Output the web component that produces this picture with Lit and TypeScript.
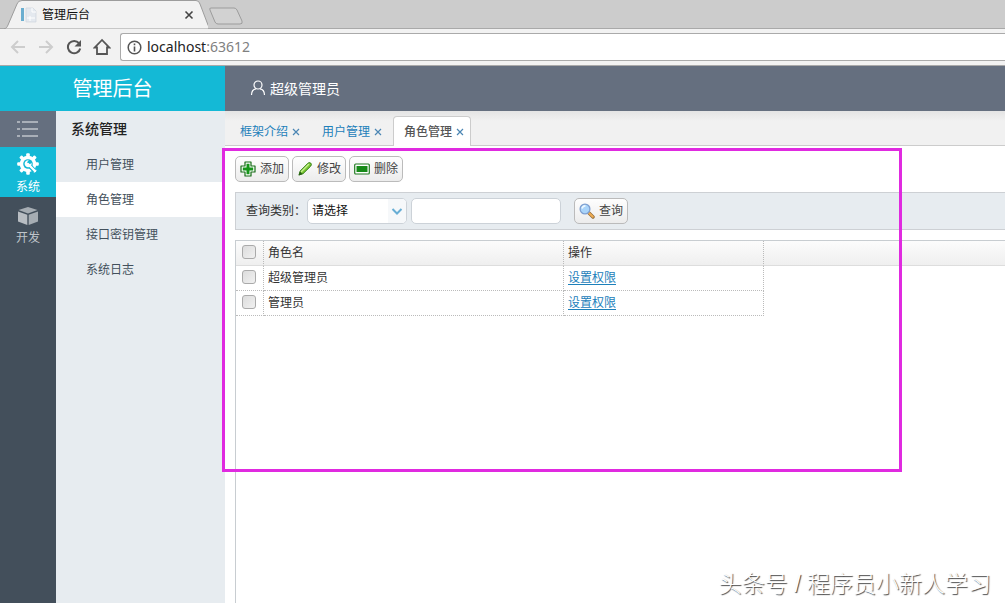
import { LitElement, html, css, svg } from "lit";
import { customElement, state } from "lit/decorators.js";
import { classMap } from "lit/directives/class-map.js";

const FONT = css`"Liberation Sans", "Noto Sans CJK SC", sans-serif`;

@customElement("browser-chrome")
export class BrowserChrome extends LitElement {
  static styles = css`
    :host { display: block; flex: none; font-family: "Noto Sans", "Noto Sans CJK SC", sans-serif; background: #f2f2f2; border-bottom: 1px solid #a9a9a9; }
    .strip { display: flex; height: 29px; background: #cccccc; box-shadow: inset 0 -1px #a9a9a9; }
    .tab { position: relative; display: flex; align-items: center; width: 204px; height: 29px; margin-left: 4px; box-sizing: border-box; padding: 0 14px 0 17px; }
    .shape { position: absolute; inset: 0; width: 100%; height: 100%; }
    .favicon, .title, .close { position: relative; }
    .favicon { flex: none; }
    .title { flex: 1; margin-left: 5px; font: 12px/20px ${FONT}; color: #111; }
    button { display: flex; align-items: center; justify-content: center; padding: 0; border: 0; background: none; }
    .new { align-self: center; margin-top: 2px; }
    .bar { display: flex; align-items: center; height: 36px; padding-left: 4px; }
    .bar button { width: 28px; height: 28px; }
    .address { display: flex; flex: 1; align-items: center; gap: 5px; height: 28px; box-sizing: border-box; margin-left: 4px; padding-left: 6px; background: #fff; border: 1px solid #aaa; border-right: 0; border-radius: 3px 0 0 3px; font-size: 14px; line-height: 20px; color: #222; }
    .port { color: #808080; }
  `;
  render() {
    return html`
      <div class="strip">
        <div class="tab">
          <svg class="shape" viewBox="0 0 204 29" preserveAspectRatio="none">
            <path d="M0 29C3 28 3 27 4 25L13 4Q14 .5 18 .5H192Q195 .5 196 4L204 25Q205 28 207 29Z" fill="#f2f2f2" stroke="#9c9c9c" />
          </svg>
          <svg class="favicon" width="16" height="16" viewBox="0 0 16 16">
            <path d="M0 1h3v13H0z" fill="#6aaed0" /><path d="M5 1h7l3 3v11H5z" fill="#e4e9ef" stroke="#cfd5de" stroke-width=".7" />
            <path d="M11 1v4h4M6 11h8M9 9v5" stroke="#fff" fill="none" />
          </svg>
          <span class="title">管理后台</span>
          <button class="close" aria-label="关闭">
            <svg width="10" height="10" viewBox="0 0 10 10"><path d="M1.5 1.5l7 7M8.5 1.5l-7 7" stroke="#444" stroke-width="1.6" /></svg>
          </button>
        </div>
        <button class="new" aria-label="新标签">
          <svg width="36" height="18" viewBox="0 0 36 18"><path d="M3 1H26Q28 1 29 3L34 14Q35 17 32 17H10Q8 17 7 15L2 3Q1 1 3 1Z" fill="#d2d2d2" stroke="#9c9c9c" /></svg>
        </button>
      </div>
      <div class="bar">
        <button aria-label="后退"><svg width="16" height="16" viewBox="0 0 16 16"><path d="M15 8H2M8 2L2 8l6 6" fill="none" stroke="#cdcdcd" stroke-width="2" /></svg></button>
        <button aria-label="前进"><svg width="16" height="16" viewBox="0 0 16 16"><path d="M1 8h13M8 2l6 6-6 6" fill="none" stroke="#cdcdcd" stroke-width="2" /></svg></button>
        <button aria-label="刷新"><svg width="16" height="16" viewBox="0 0 16 16"><path d="M13 4.2A6.2 6.2 0 1 0 14.2 9.5" fill="none" stroke="#555" stroke-width="2" /><path d="M15 1v6.500H8.500z" fill="#555" /></svg></button>
        <button aria-label="主页"><svg width="18" height="18" viewBox="0 0 18 18"><path d="M9 2L1.8 9.500H4V16H14V9.500H16.200Z" fill="none" stroke="#555" stroke-width="1.8" /></svg></button>
        <div class="address">
          <svg width="15" height="15" viewBox="0 0 15 15"><circle cx="7.5" cy="7.5" r="6.3" fill="none" stroke="#555" stroke-width="1.5" /><path d="M7.5 6.500v5M7.5 3.500v1.700" stroke="#555" stroke-width="1.6" /></svg>
          <span>localhost<span class="port">:63612</span></span>
        </div>
      </div>`;
  }
}

const teeth = [0, 45, 90, 135, 180, 225, 270, 315];
const gear = svg`<circle cx="11" cy="11" r="8.300" fill="#fff" />${teeth.map(
  (a) => svg`<rect x="9.200" y=".2" width="3.600" height="4" rx="1" fill="#fff" transform="rotate(${a} 11 11)" />`
)}<circle cx="11" cy="11" r="4.800" fill="#14b9d6" /><path d="M11.500 11.500L17.500 18" stroke="#14b9d6" stroke-width="4.400" /><path d="M11 11L18 18" stroke="#fff" stroke-width="2.400" stroke-linecap="round" /><path d="M11.800 7.300L10 9.200 12.500 11.800 14.500 9.800A3.500 3.500 0 1 1 11.800 7.300Z" fill="#fff" />`;
const box = svg`<path d="M11 1L20.500 4 11 7.500 1.500 4Z" fill="#a6adb3" /><path d="M1 5.500L10.300 8.800V19L1 15.500Z" fill="#b8bdc2" /><path d="M21 5.500L11.700 8.800V19L21 15.500Z" fill="#a6adb3" />`;

@customElement("side-menu")
export class SideMenu extends LitElement {
  @state() private current = "角色管理";
  static styles = css`
    :host { display: flex; flex: none; font: 12px/18px ${FONT}; }
    button { display: flex; flex-direction: column; align-items: center; justify-content: center; width: 100%; border: 0; padding: 0; font: inherit; color: #bfc4c9; background: none; }
    .rail { width: 56px; background: #434f5b; }
    .toggle { height: 36px; background: #656f7f; }
    .module { height: 50px; gap: 3px; padding-top: 4px; }
    .module.active { background: #14b9d6; color: #fff; }
    .module + .module { padding-top: 8px; }
    .menu { width: 169px; background: #e7ecf0; color: #333; }
    h2 { margin: 0; padding-left: 15px; font-size: 14px; font-weight: 500; line-height: 36px; color: #222; }
    a { display: block; height: 35px; box-sizing: border-box; padding: 1px 0 0 30px; line-height: 35px; color: #43505c; text-decoration: none; }
    a.active { background: #fff; }
  `;
  render() {
    return html`
      <nav class="rail">
        <button class="toggle" aria-label="折叠菜单">
          <svg width="22" height="18" viewBox="0 0 22 18"><path d="M0 2h3M5 2h16M0 9h3M5 9h16M0 16h3M5 16h16" stroke="#a9afb8" stroke-width="2" /></svg>
        </button>
        <button class="module active"><svg width="22" height="22" viewBox="0 0 22 22">${gear}</svg>系统</button>
        <button class="module"><svg width="22" height="20" viewBox="0 0 22 20">${box}</svg>开发</button>
      </nav>
      <nav class="menu">
        <h2>系统管理</h2>
        ${["用户管理", "角色管理", "接口密钥管理", "系统日志"].map(
          (t) => html`<a href="#" class=${classMap({ active: t === this.current })} @click=${(e: Event) => { e.preventDefault(); this.current = t; }}>${t}</a>`
        )}
      </nav>`;
  }
}

const icons = {
  add: svg`<path d="M5 1h6v4h4v6h-4v4H5v-4H1V5h4z" fill="#fff" stroke="#176d17" stroke-width="1.200" stroke-linejoin="round" /><path d="M6.500 2.800h3v3.700h3.700v3H9.500v3.700h-3V9.500H2.800v-3h3.700z" fill="#159519" />`,
  edit: svg`<path d="M2 14L3.200 10 11 2.200Q12.500 1 13.800 2.200 15 3.500 13.800 5L6 12.700Z" fill="#79c831" stroke="#337c16" /><path d="M4 11L12 3" stroke="#c9ef93" stroke-width="1.300" /><path d="M1.500 14.500L3 10.500 5.500 13Z" fill="#286017" />`,
  remove: svg`<rect x=".7" y="3" width="14.600" height="10" rx="1" fill="#fff" stroke="#237b23" stroke-width="1.200" /><path d="M2.500 5h11v6h-11z" fill="#168a18" />`,
  search: svg`<path d="M9.500 9.500L14 14" stroke="#8f6a3a" stroke-width="3.400" stroke-linecap="round" /><path d="M10 10L13.800 13.800" stroke="#f0ad52" stroke-width="2" stroke-linecap="round" /><circle cx="6" cy="6" r="4.900" fill="#a9d4fa" stroke="#7f9fd0" stroke-width="1.300" /><path d="M3 5.500Q3.500 3 6.500 2.700" stroke="#eef8ff" stroke-width="1.600" fill="none" />`,
};

@customElement("role-panel")
export class RolePanel extends LitElement {
  static styles = css`
    :host { display: flex; flex-direction: column; flex: 1; min-width: 0; background: #fff; font: 12px/18px ${FONT}; color: #333; }
    .tabs { display: flex; align-items: flex-end; height: 34px; padding-left: 4px; background: linear-gradient(#e4e4e4, #f1f1f1 10px); border-bottom: 1px solid #ccc; }
    .tab { display: flex; align-items: center; gap: 4px; height: 28px; box-sizing: border-box; padding: 0 10px; border: 1px solid transparent; border-bottom: 0; }
    .tab a { color: #1c80ba; text-decoration: none; }
    .tab.active { margin-bottom: -1px; padding-right: 6px; height: 30px; background: #fff; border-color: #ccc; border-radius: 4px 4px 0 0; }
    .tab.active a { color: #555; font-weight: 500; }
    .x { padding: 0; border: 0; background: none; display: flex; }
    .tools { display: flex; gap: 3px; padding: 10px 10px 0; }
    .btn { display: flex; align-items: center; gap: 4px; height: 26px; box-sizing: border-box; padding: 0 4px; font: inherit; color: #444; background: linear-gradient(#fefefe, #ececec); border: 1px solid #bbb; border-radius: 5px; }
    .search { display: flex; align-items: center; height: 36px; margin: 10px 0 10px 10px; padding-left: 10px; background: #e7ecf0; border: 1px solid #cdd0d4; border-right: 0; }
    .search select, .search input { box-sizing: border-box; height: 26px; font: inherit; color: #111; border: 1px solid #ccd2d8; border-radius: 5px; background: #fff; }
    .pick { position: relative; margin: 0 4px 0 1px; }
    .pick select { appearance: none; display: block; width: 100px; padding: 0 22px 0 4px; }
    .arrow { position: absolute; right: 1px; top: 1px; width: 18px; height: 24px; background: #f6f8fa; border-radius: 0 4px 4px 0; pointer-events: none; }
    .search input { width: 150px; padding: 0 5px; }
    .search .btn { margin-left: 13px; }
    .grid { flex: 1; margin-left: 10px; border: 1px solid #c8cdd1; border-width: 1px 0 0 1px; }
    table { width: 100%; table-layout: fixed; border-collapse: separate; border-spacing: 0; }
    th, td { box-sizing: border-box; height: 25px; padding: 0 4px; text-align: left; font-weight: 400; border-right: 1px dotted #bbb; border-bottom: 1px dotted #bbb; }
    th { background: linear-gradient(#fcfcfc, #efefef); border-bottom: 1px solid #ddd; }
    th:last-child { border-right: 0; }
    td:last-child { border: 0; }
    .c-check { width: 28px; }
    .c-name { width: 300px; }
    .c-act { width: 200px; }
    .check { padding: 0 6px; }
    .check input { appearance: none; display: block; width: 14px; height: 14px; margin: 0 0 2px; box-sizing: border-box; border: 1px solid #aaa; border-radius: 3px; background: linear-gradient(135deg, #dcdcdc, #f1f1f1); }
    td a { color: #1c80ba; text-underline-offset: 2px; }
  `;
  private icon(name: keyof typeof icons) {
    return html`<svg width="16" height="16" viewBox="0 0 16 16">${icons[name]}</svg>`;
  }
  render() {
    return html`
      <div class="tabs">
        ${["框架介绍", "用户管理", "角色管理"].map((t, i) => html`
          <div class=${classMap({ tab: true, active: i === 2 })}>
            <a href="#">${t}</a>
            <button class="x" aria-label="关闭${t}"><svg width="8" height="8" viewBox="0 0 8 8"><path d="M1 1l6 6M7 1L1 7" stroke="#4b86b4" stroke-width="1.200" /></svg></button>
          </div>`)}
      </div>
      <div class="tools">
        <button class="btn">${this.icon("add")}添加</button>
        <button class="btn">${this.icon("edit")}修改</button>
        <button class="btn">${this.icon("remove")}删除</button>
      </div>
      <form class="search" @submit=${(e: Event) => e.preventDefault()}>
        <label for="kind">查询类别：</label>
        <div class="pick">
          <select id="kind"><option>请选择</option></select>
          <svg class="arrow" viewBox="0 0 18 24"><path d="M4.500 10l4.500 4.500L13.500 10" fill="none" stroke="#68aed5" stroke-width="2" /></svg>
        </div>
        <input type="text" aria-label="查询内容" />
        <button class="btn">${this.icon("search")}查询</button>
      </form>
      <div class="grid">
        <table>
          <colgroup><col class="c-check" /><col class="c-name" /><col class="c-act" /><col /></colgroup>
          <thead><tr><th class="check"><input type="checkbox" aria-label="全选" /></th><th>角色名</th><th>操作</th><th></th></tr></thead>
          <tbody>
            ${["超级管理员", "管理员"].map((r) => html`
              <tr><td class="check"><input type="checkbox" aria-label=${r} /></td><td>${r}</td><td><a href="#">设置权限</a></td><td></td></tr>`)}
          </tbody>
        </table>
      </div>`;
  }
}

@customElement("app-root")
export class AppRoot extends LitElement {
  static styles = css`
    :host { position: relative; display: flex; flex-direction: column; min-height: 100vh; overflow: hidden; font-family: ${FONT}; }
    header { display: flex; height: 45px; background: #656f7f; color: #fff; }
    h1 { width: 225px; box-sizing: border-box; margin: 0; padding-top: 2px; background: #14b9d6; font-size: 20px; font-weight: 400; line-height: 43px; text-align: center; }
    .user { display: flex; align-items: center; gap: 4px; padding: 0 0 2px 25px; font-size: 14px; }
    main { display: flex; flex: 1; }
    .highlight { position: absolute; left: 222px; top: 148px; width: 680px; height: 324px; box-sizing: border-box; border: 3px solid #e02ae0; pointer-events: none; }
    .credit { position: absolute; right: 14px; bottom: 3px; font-size: 23px; font-weight: 300; line-height: 32px; color: #fff; text-shadow: 1px 1px 1px #444; }
  `;
  render() {
    return html`
      <browser-chrome></browser-chrome>
      <header>
        <h1>管理后台</h1>
        <div class="user">
          <svg width="16" height="16" viewBox="0 0 16 16" fill="none" stroke="#fff" stroke-width="1.200"><circle cx="8" cy="5" r="4" /><path d="M1.500 15Q1.500 9.500 6 8.800M14.500 15Q14.500 9.500 10 8.800" /></svg>
          超级管理员
        </div>
      </header>
      <main><side-menu></side-menu><role-panel></role-panel></main>
      <div class="highlight"></div>
      <div class="credit">头条号 / 程序员小新人学习</div>`;
  }
}
